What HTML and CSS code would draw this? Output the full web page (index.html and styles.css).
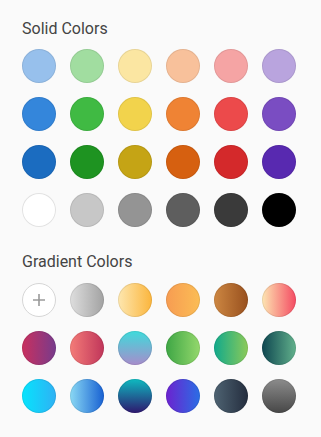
FILE: index.html
```html
<!DOCTYPE html>
<html lang="en">

<head>
    <meta charset="UTF-8">
    <meta name="viewport" content="width=device-width, initial-scale=1.0">
    <title>Color Picker</title>
    <link rel="stylesheet" href="styles.css">
</head>

<body>
    <div id="picker">
        <h3 class="section-title">Solid Colors</h3>
        <div class="swatch-grid" id="solid-grid"></div>

        <h3 class="section-title gradient-title">Gradient Colors</h3>
        <div class="swatch-grid" id="gradient-grid">
            <button class="swatch add-swatch" title="Add gradient">
                <svg width="14" height="14" viewBox="0 0 14 14">
                    <path d="M7 1v12M1 7h12" stroke="#9a9a9a" stroke-width="1.6" fill="none" />
                </svg>
            </button>
        </div>
    </div>

    <script>
        // solid colours, row by row
        const solidColors = [
            "#97c0ec", "#a1dda0", "#fbe6a2", "#f8c19b", "#f5a4a4", "#b9a4de",
            "#3486db", "#40ba43", "#f2d34c", "#ef8334", "#ec4a4b", "#7a4dc2",
            "#1b6cc0", "#1e9321", "#c5a415", "#d66010", "#d4292b", "#5829b0",
            "#ffffff", "#c7c7c7", "#949494", "#5e5e5e", "#3a3a3a", "#000000",
        ];

        // gradients (first slot is the "+" button)
        const gradients = [
            "linear-gradient(90deg, #dedede, #a2a2a2)",
            "linear-gradient(90deg, #fde7b0, #fbb53c)",
            "linear-gradient(90deg, #f79c52, #fbbd55)",
            "linear-gradient(90deg, #cd8742, #98501e)",
            "linear-gradient(90deg, #fde6b2, #f44a62)",
            "linear-gradient(90deg, #c9305e, #773b8c)",
            "linear-gradient(90deg, #f47c78, #c0355a)",
            "linear-gradient(180deg, #3edbdb, #a78ccb)",
            "linear-gradient(90deg, #3ea645, #94d86c)",
            "linear-gradient(90deg, #10a98c, #8cca58)",
            "linear-gradient(90deg, #0e4650, #62b18c)",
            "linear-gradient(90deg, #06e4fd, #2fb1f4)",
            "linear-gradient(90deg, #8ad9f4, #1760d2)",
            "linear-gradient(180deg, #0ebac0, #2e176e)",
            "linear-gradient(90deg, #6c22cf, #2a6ee5)",
            "linear-gradient(90deg, #4e6372, #242d3e)",
            "linear-gradient(180deg, #8c8c8c, #474747)",
        ];

        function addSwatch(grid, background, extraClass) {
            const div = document.createElement('div');
            div.classList.add('swatch');
            if (extraClass) div.classList.add(extraClass);
            div.style.background = background;
            grid.appendChild(div);
        }

        const solidGrid = document.getElementById('solid-grid');
        solidColors.forEach(c => addSwatch(solidGrid, c, c === "#ffffff" ? 'white-swatch' : ''));

        const gradientGrid = document.getElementById('gradient-grid');
        gradients.forEach(g => addSwatch(gradientGrid, g));
    </script>
</body>

</html>
```

FILE: styles.css
```css
/* page */
body {
    margin: 0;
    background-color: #fafafa;
    font-family: Roboto, "Liberation Sans", Arial, sans-serif;
}

#picker {
    padding: 19px 22px 20px;
}

/* headings */
.section-title {
    margin: 0 0 11px;
    font-size: 16px;
    line-height: 19px;
    font-weight: 400;
    color: #444;
}

.gradient-title {
    margin-top: 25px;
    margin-bottom: 12px;
}

/* swatches */
.swatch-grid {
    display: grid;
    grid-template-columns: repeat(6, 34px);
    grid-auto-rows: 34px;
    column-gap: 14px;
    row-gap: 14px;
}

.swatch {
    width: 34px;
    height: 34px;
    border-radius: 50%;
    box-sizing: border-box;
    box-shadow: inset 0 0 0 1px rgba(0, 0, 0, 0.08);
    cursor: pointer;
}

.white-swatch {
    box-shadow: inset 0 0 0 1px #e2e2e2;
}

.add-swatch {
    padding: 0;
    border: 1px solid #d6d6d6;
    background: #fff;
    box-shadow: none;
    display: flex;
    align-items: center;
    justify-content: center;
}
```
